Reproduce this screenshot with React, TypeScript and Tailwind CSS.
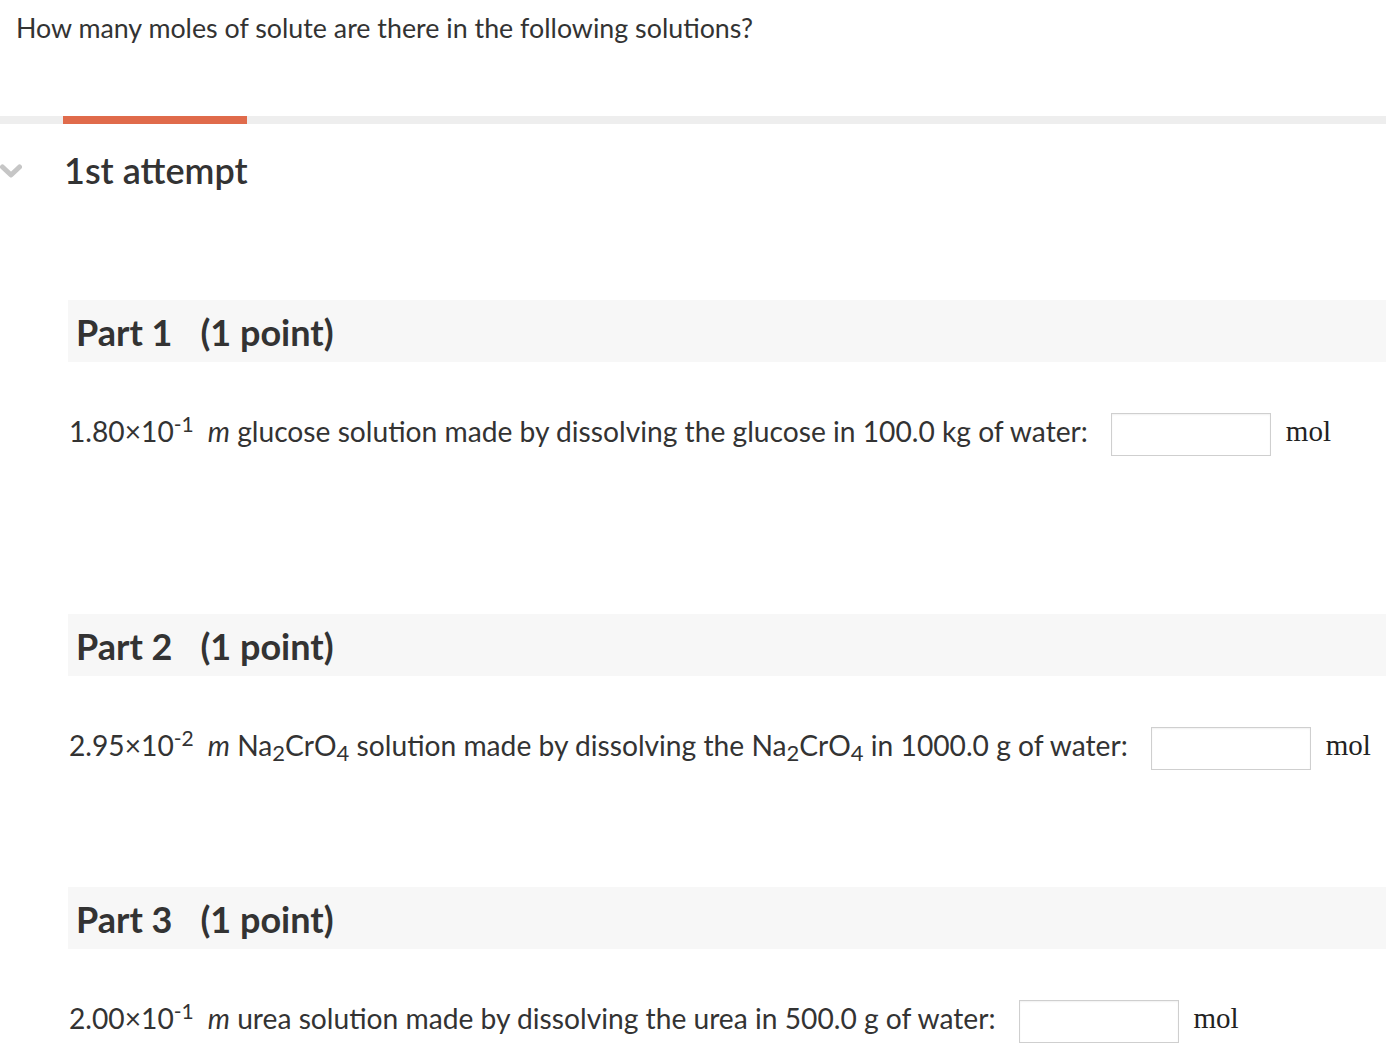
import React from "react";

function Input() {
  return (
    <div className="w-[160px] h-[43px] border border-[#cfcfcf] bg-white shadow-[inset_0_1px_2px_rgba(0,0,0,0.06)] shrink-0" />
  );
}

function Mol() {
  return (
    <span className="ml-[15px] mt-[-5px] text-[29px] text-[#222]" style={{ fontFamily: '"Liberation Serif", "Times New Roman", serif' }}>
      mol
    </span>
  );
}

function Header({ n }: { n: number }) {
  return (
    <div className="h-[62px] bg-[#f7f7f7] flex items-center pl-[8px] text-[36px] font-bold text-[#333]">
      <span className="mt-[1px]">Part {n}</span>
      <span className="ml-[28px] mt-[1px]">(1 point)</span>
    </div>
  );
}

function Sci({ a, e }: { a: string; e: string }) {
  return (
    <span>
      {a}×10<sup className="text-[21px] relative top-[-10px]">{e}</sup>
      <span className="ml-[14px] italic">m</span>
    </span>
  );
}

function Sub({ c }: { c: string }) {
  return <sub className="text-[22px] relative bottom-[-5px]">{c}</sub>;
}

export default function App() {
  return (
    <div className="bg-white min-h-[1062px] text-[#333] overflow-hidden" style={{ fontFamily: 'Lato, "Open Sans", sans-serif' }}>
      <div className="pl-[16px] pt-[11px] text-[26.8px] leading-[34px] text-[#333]">
        How many moles of solute are there in the following solutions?
      </div>
      <div className="mt-[71px] h-[8px] bg-[#eeeeee] flex">
        <div className="ml-[63px] w-[184px] h-full bg-[#e06b4b]" />
      </div>
      <div className="mt-[25px] h-[42px] flex items-center">
        <svg width="22" height="14" viewBox="0 0 22 14" className="mt-[2px]">
          <path d="M2.5 3 L11 11 L19.5 3" stroke="#c6c6c6" strokeWidth="5" fill="none" strokeLinecap="round" strokeLinejoin="round" />
        </svg>
        <span className="ml-[42px] text-[36px] font-semibold text-[#333]">1st attempt</span>
      </div>

      <div className="ml-[68px]">
        <div className="mt-[109px]">
          <Header n={1} />
        </div>
        <div className="mt-[51px] flex items-center text-[28.2px]">
          <span className="ml-[1px] mt-[-7px]">
            <Sci a="1.80" e="-1" /> glucose solution made by dissolving the glucose in 100.0 kg of water:
          </span>
          <span className="ml-[23px]"><Input /></span>
          <Mol />
        </div>

        <div className="mt-[158px]">
          <Header n={2} />
        </div>
        <div className="mt-[51px] flex items-center text-[28.2px]">
          <span className="ml-[1px] mt-[-7px]">
            <Sci a="2.95" e="-2" /> Na<Sub c="2" />CrO<Sub c="4" /> solution made by dissolving the Na<Sub c="2" />CrO<Sub c="4" /> in 1000.0 g of water:
          </span>
          <span className="ml-[23px]"><Input /></span>
          <Mol />
        </div>

        <div className="mt-[117px]">
          <Header n={3} />
        </div>
        <div className="mt-[51px] flex items-center text-[28.2px]">
          <span className="ml-[1px] mt-[-7px]">
            <Sci a="2.00" e="-1" /> urea solution made by dissolving the urea in 500.0 g of water:
          </span>
          <span className="ml-[23px]"><Input /></span>
          <Mol />
        </div>
      </div>
    </div>
  );
}
